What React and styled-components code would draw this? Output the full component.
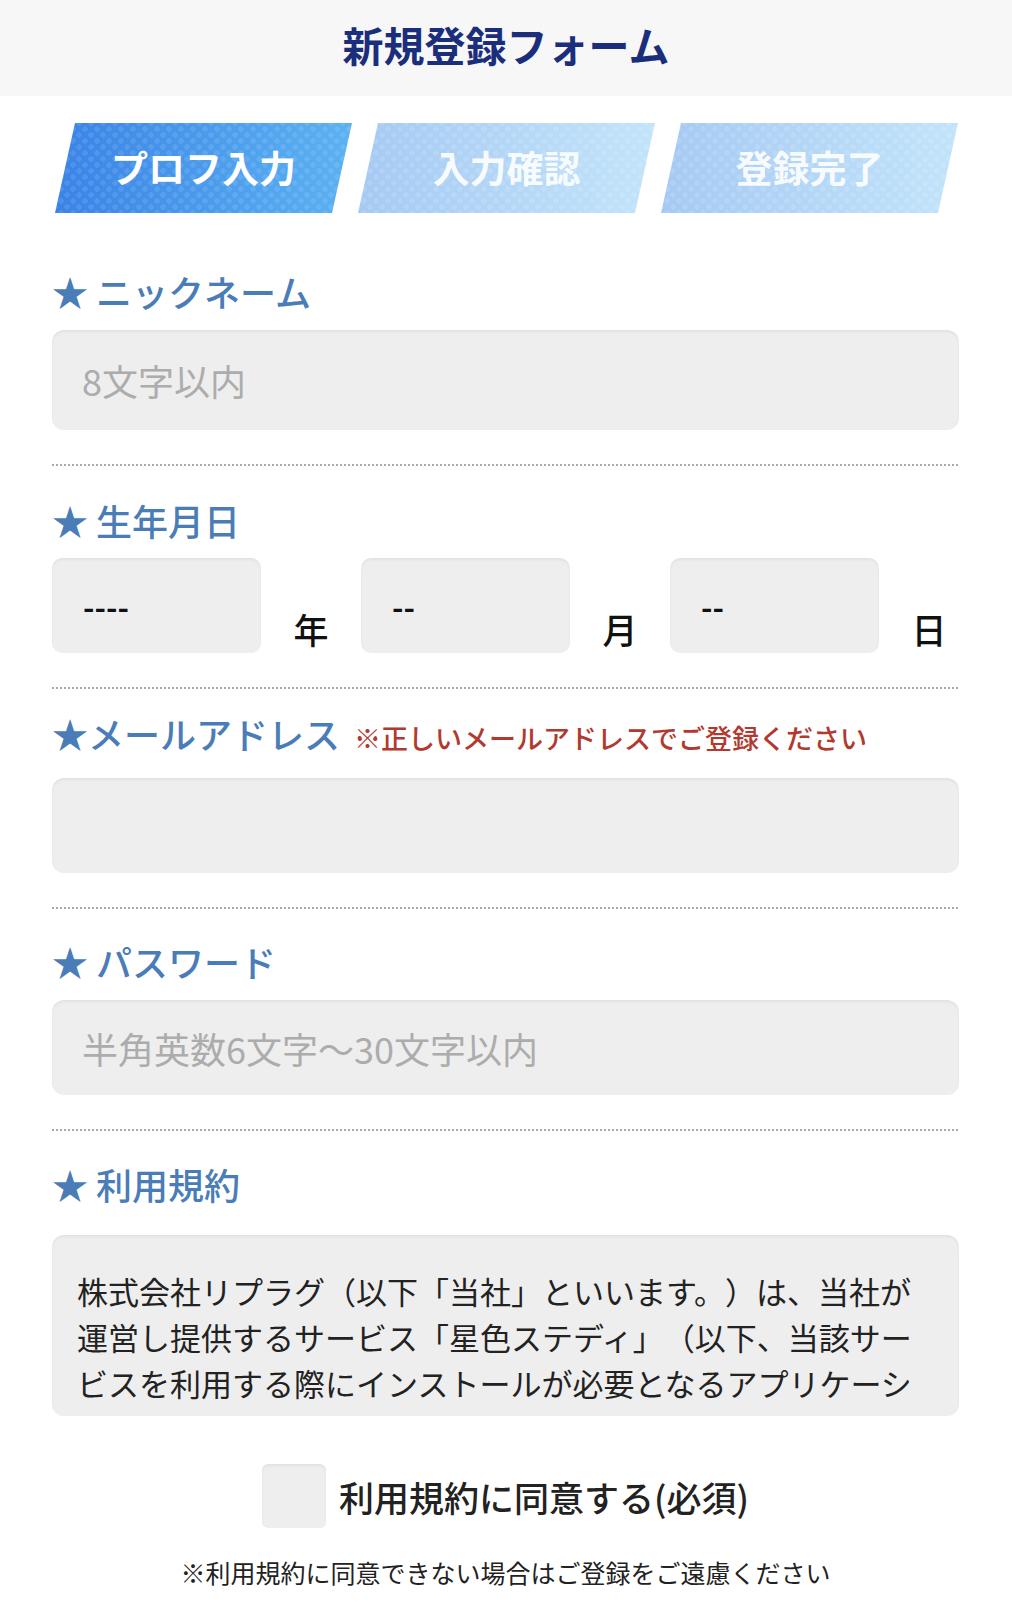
import React from 'react';
import styled, { createGlobalStyle, css } from 'styled-components';

const steps = [
	{ label: 'プロフ入力', active: true },
	{ label: '入力確認', active: false },
	{ label: '登録完了', active: false },
];

const terms =
	'株式会社リプラグ（以下「当社」といいます。）は、当社が運営し提供するサービス「星色ステディ」（以下、当該サービスを利用する際にインストールが必要となるアプリケーションを含み、以下「本サービス」といいます。）の利用条件を定めます。';

export default function App() {
	return (
		<>
			<GlobalStyle />
			<Header>
				<Title>新規登録フォーム</Title>
			</Header>

			<Steps>
				{steps.map((step) => (
					<Step key={step.label} $active={step.active}>
						{step.label}
					</Step>
				))}
			</Steps>

			<Form>
				<Section $top={58}>
					<Label>★ ニックネーム</Label>
					<Input placeholder="8文字以内" />
				</Section>
				<Divider />

				<Section>
					<Label $gap={18}>★ 生年月日</Label>
					<DateRow>
						<DateGroup>
							<DateBox>----</DateBox>
							<Suffix>年</Suffix>
						</DateGroup>
						<DateGroup>
							<DateBox>--</DateBox>
							<Suffix>月</Suffix>
						</DateGroup>
						<DateGroup>
							<DateBox>--</DateBox>
							<Suffix>日</Suffix>
						</DateGroup>
					</DateRow>
				</Section>
				<Divider />

				<Section $top={24}>
					<Label $gap={25}>
						★メールアドレス
						<Note>※正しいメールアドレスでご登録ください</Note>
					</Label>
					<Input $height={95} />
				</Section>
				<Divider />

				<Section $top={32}>
					<Label>★ パスワード</Label>
					<Input $height={95} type="text" placeholder="半角英数6文字〜30文字以内" />
				</Section>
				<Divider />

				<Section $top={33}>
					<Label $gap={31}>★ 利用規約</Label>
					<TermsBox>
						<TermsText>{terms}</TermsText>
					</TermsBox>
				</Section>

				<Agree>
					<CheckBox />
					<AgreeText>利用規約に同意する(必須)</AgreeText>
				</Agree>
				<Caution>※利用規約に同意できない場合はご登録をご遠慮ください</Caution>
			</Form>
		</>
	);
}

const GlobalStyle = createGlobalStyle`
	body {
		margin: 0;
		background: #fff;
		font-family: "Noto Sans CJK JP", "Noto Sans", sans-serif;
		color: #222;
	}
	* {
		box-sizing: border-box;
	}
`;

const Header = styled.header`
	display: flex;
	align-items: center;
	justify-content: center;
	height: 96px;
	background-color: #f7f7f8;
`;

const Title = styled.h1`
	margin: 0 0 8px;
	font-size: 41px;
	font-weight: 700;
	color: #1b2e7c;
`;

const Steps = styled.div`
	display: flex;
	gap: 6px;
	padding: 27px 0 0 55px;
`;

const activeBg = css`
	background-image: radial-gradient(circle, rgba(255, 255, 255, 0.1) 2.5px, transparent 3px),
		radial-gradient(circle, rgba(255, 255, 255, 0.1) 2.5px, transparent 3px),
		linear-gradient(90deg, #3a83e6, #5bb2f2);
`;

const idleBg = css`
	background-image: radial-gradient(circle, rgba(255, 255, 255, 0.12) 2.5px, transparent 3px),
		radial-gradient(circle, rgba(255, 255, 255, 0.12) 2.5px, transparent 3px),
		linear-gradient(90deg, #a5c9f3, #c2e4fa);
`;

const Step = styled.div`
	display: flex;
	align-items: center;
	justify-content: center;
	width: 297px;
	height: 90px;
	clip-path: polygon(20px 0, 100% 0, calc(100% - 20px) 100%, 0 100%);
	${(p) => (p.$active ? activeBg : idleBg)};
	background-size: 12px 12px, 12px 12px, 100% 100%;
	background-position: 0 0, 6px 6px, 0 0;
	color: ${(p) => (p.$active ? '#fff' : 'rgba(255, 255, 255, 0.92)')};
	font-size: 37px;
	font-weight: 700;
	padding-bottom: 2px;
`;

const Form = styled.main`
	padding: 0 53px 60px 52px;
`;

const Section = styled.section`
	padding-top: ${(p) => p.$top ?? 34}px;
`;

const Label = styled.div`
	display: flex;
	align-items: baseline;
	height: 40px;
	line-height: 40px;
	margin-bottom: ${(p) => p.$gap ?? 19}px;
	font-size: 36px;
	font-weight: 500;
	color: #4a7db7;
	white-space: nowrap;
`;

const Note = styled.span`
	margin-left: 14px;
	font-size: 27px;
	font-weight: 500;
	color: #b2392f;
`;

const field = css`
	background-color: #eeeeee;
	border-radius: 12px;
	box-shadow: inset 0 2px 3px rgba(0, 0, 0, 0.05);
`;

const Input = styled.input`
	${field};
	display: block;
	width: 100%;
	height: ${(p) => p.$height ?? 100}px;
	padding: 0 30px;
	border: none;
	outline: none;
	font-family: inherit;
	font-size: 36px;
	color: #222;
	&::placeholder {
		color: #acacac;
		opacity: 1;
	}
`;

const Divider = styled.hr`
	height: 2px;
	margin: 34px 0 0;
	border: none;
	background-image: linear-gradient(90deg, #a9a9a9 50%, transparent 50%);
	background-size: 4px 2px;
`;

const DateRow = styled.div`
	display: flex;
`;

const DateGroup = styled.div`
	display: flex;
	align-items: flex-end;
	flex-shrink: 0;
`;

const DateBox = styled.div`
	${field};
	display: flex;
	align-items: center;
	width: 209px;
	height: 95px;
	padding-left: 31px;
	font-size: 31px;
	font-weight: 700;
	color: #111;
	border-radius: 10px;
`;

const Suffix = styled.span`
	width: 100px;
	margin-bottom: 4px;
	text-align: center;
	font-size: 35px;
	font-weight: 500;
	line-height: 40px;
	color: #111;
`;

const TermsBox = styled.div`
	${field};
	height: 181px;
	padding: 33px 0 0 25px;
`;

const TermsText = styled.p`
	margin: 0;
	width: 850px;
	max-height: 138px;
	overflow: hidden;
	font-size: 31px;
	line-height: 46px;
	color: #222;
	line-break: anywhere;
	text-spacing-trim: space-all;
`;

const Agree = styled.label`
	display: flex;
	align-items: center;
	justify-content: center;
	gap: 13px;
	margin-top: 48px;
`;

const CheckBox = styled.span`
	${field};
	width: 64px;
	height: 64px;
	border-radius: 6px;
`;

const AgreeText = styled.span`
	font-size: 35px;
	font-weight: 500;
	color: #222;
`;

const Caution = styled.p`
	margin: 26px 0 0;
	text-align: center;
	font-size: 25px;
	line-height: 36px;
	color: #222;
`;
